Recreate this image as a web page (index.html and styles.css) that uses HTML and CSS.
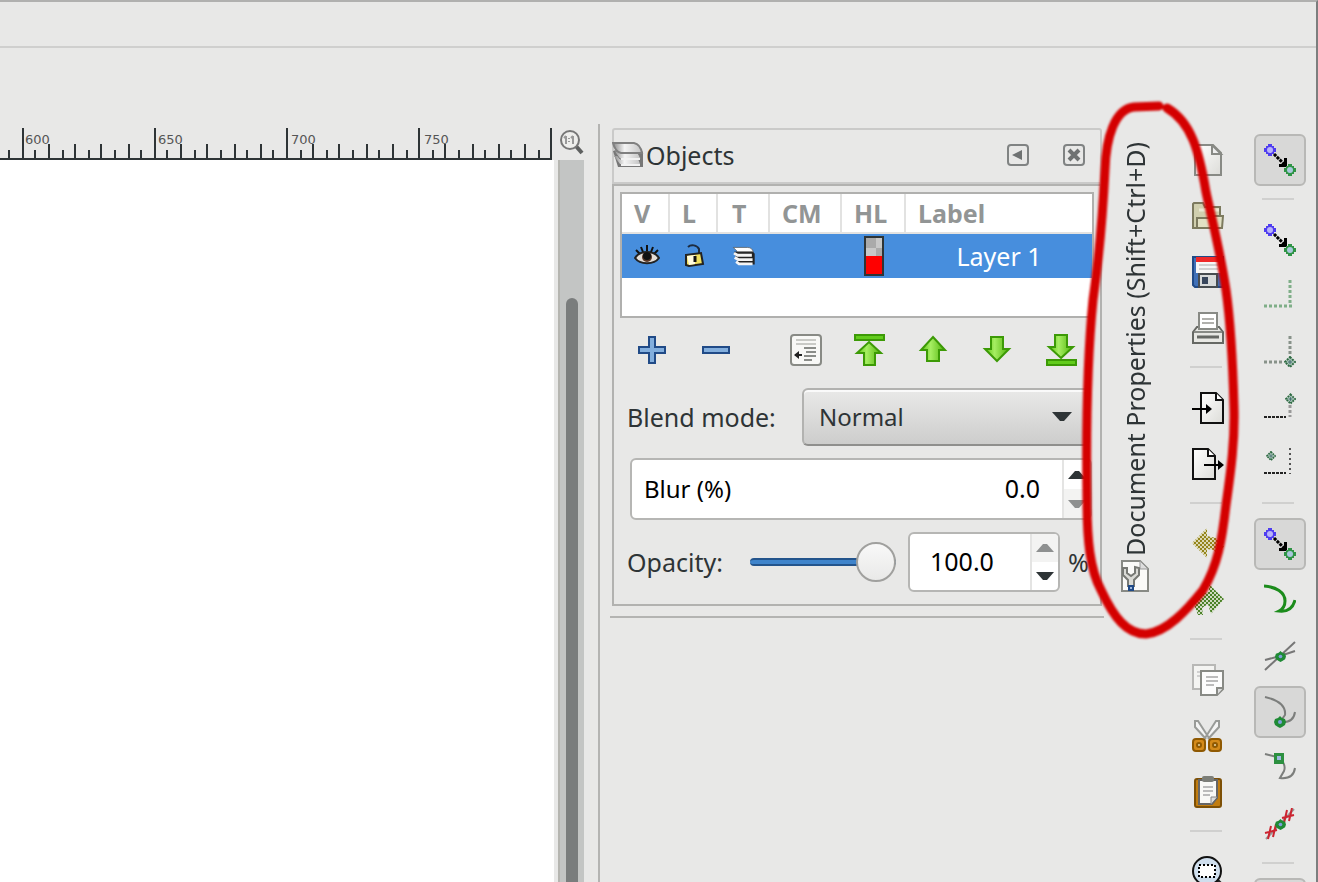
FILE: index.html
```html
<!DOCTYPE html>
<html lang="en">
<head>
  <meta charset="UTF-8">
  <meta name="viewport" content="width=device-width, initial-scale=1.0">
  <title>Objects</title>
  <link rel="stylesheet" href="styles.css">
</head>
<body>
  <!-- shared icon parts -->
  <svg class="defs" width="0" height="0" aria-hidden="true">
    <defs>
      <linearGradient id="green" x1="0" x2="1" y1="0" y2="0">
        <stop offset="0" stop-color="#5cc410"/>
        <stop offset="0.4" stop-color="#a6ee62"/>
        <stop offset="1" stop-color="#4fb30a"/>
      </linearGradient>
      <linearGradient id="paper" x1="0" x2="1" y1="0" y2="1">
        <stop offset="0" stop-color="#ffffff"/>
        <stop offset="1" stop-color="#dcdcd8"/>
      </linearGradient>
      <linearGradient id="sheet" x1="0" x2="1" y1="0" y2="0">
        <stop offset="0" stop-color="#8a8a8a"/>
        <stop offset="0.4" stop-color="#f4f4f4"/>
        <stop offset="1" stop-color="#c4c4c4"/>
      </linearGradient>
      <pattern id="dither-gold" width="4" height="4" patternUnits="userSpaceOnUse">
        <rect width="4" height="4" fill="#dcd8b4"/>
        <rect width="2" height="2" fill="#94851c"/>
        <rect x="2" y="2" width="2" height="2" fill="#94851c"/>
      </pattern>
      <pattern id="dither-green" width="4" height="4" patternUnits="userSpaceOnUse">
        <rect width="4" height="4" fill="#ced9c0"/>
        <rect width="2" height="2" fill="#4b8228"/>
        <rect x="2" y="2" width="2" height="2" fill="#4b8228"/>
      </pattern>
      <symbol id="snap" viewBox="0 0 32 32">
        <path d="M10 10l10 10" stroke="#000" stroke-width="3" stroke-dasharray="3 1"/>
        <path d="M23 23h-8v-3h3l2-2v-4h3z" fill="#000"/>
        <path d="M4 0h4v2h2v2h2v4h-2v2H8v2H4v-2H2V8H0V4h2V2h2z" fill="#4f3df0"/>
        <circle cx="6" cy="6" r="3" fill="#b9b4f8"/>
        <path d="M24 20h4v2h2v2h2v4h-2v2h-2v2h-4v-2h-2v-2h-2v-4h2v-2h2z" fill="#2f9445"/>
        <circle cx="26" cy="26" r="3" fill="#a9c6dc"/>
      </symbol>
      <symbol id="node" viewBox="0 0 12 12">
        <path d="M6 0l2 2 3 1 1 3-1 3-3 2-2 1-2-1-3-2-1-3 1-3 3-1z" fill="#1f8a35"/>
        <circle cx="6" cy="6" r="2" fill="#7f9cdc"/>
      </symbol>
      <symbol id="diamond" viewBox="0 0 12 12">
        <path d="M6 1l5 5-5 5-5-5z" fill="#a4c0b4" stroke="#2d6a42" stroke-width="2" stroke-dasharray="2 1"/>
        <path d="M4 6h4M6 4v4" stroke="#456a70"/>
      </symbol>
      <symbol id="layers" viewBox="0 0 32 28">
        <path d="M1 10l5 16h25V11l-4-3z" fill="#777"/>
        <path d="M2 15l6 8h20l-3-8z" fill="url(#sheet)"/>
        <path d="M2 10l6 8h21l-4-8z" fill="url(#sheet)" stroke="#777"/>
        <path d="M1 2h21c5 1 7 5 8 10H9C4 11 2 6 1 2z" fill="url(#sheet)" stroke="#808080" stroke-width="2"/>
        <path d="M9 24h19M9 18h19" stroke="#f2f2f2" stroke-width="2"/>
      </symbol>
    </defs>
  </svg>

  <header class="menubar"></header>
  <div class="tool-controls"></div>

  <main class="workspace">
    <section class="canvas-area">
      <div class="ruler">
        <svg width="552" height="32">
          <g stroke="#2e3436" stroke-width="2">
            <path d="M0 31h552"/>
            <path d="M23 0v32M155 0v32M287 0v32M419 0v32M551 0v32"/>
            <path d="M49 16v16M75 16v16M101 16v16M129 16v16M181 16v16M207 16v16M235 16v16M261 16v16M313 16v16M339 16v16M367 16v16M393 16v16M445 16v16M473 16v16M499 16v16M525 16v16"/>
            <path d="M9 22v10M35 22v10M63 22v10M89 22v10M115 22v10M141 22v10M167 22v10M195 22v10M221 22v10M247 22v10M273 22v10M301 22v10M327 22v10M353 22v10M379 22v10M407 22v10M433 22v10M459 22v10M485 22v10M511 22v10M539 22v10"/>
          </g>
          <g class="ruler-labels">
            <text x="25" y="16">600</text>
            <text x="158" y="16">650</text>
            <text x="291" y="16">700</text>
            <text x="424" y="16">750</text>
          </g>
        </svg>
      </div>
      <div class="page"></div>
    </section>

    <div class="scroll-area">
      <button class="zoom-fit" aria-label="Zoom 1:1">
        <svg width="26" height="26" viewBox="0 0 26 26">
          <path d="M17 16l7 8" stroke="#5e6060" stroke-width="4"/>
          <circle cx="12" cy="11" r="9" fill="#eeeeec" stroke="#777" stroke-width="2"/>
          <path d="M8 7v8M15 7v8M6 9l2-2M13 9l2-2M11 9v1M11 12v1" stroke="#999" stroke-width="2" fill="none"/>
        </svg>
      </button>
      <div class="scrollbar"><div class="thumb"></div></div>
    </div>

    <section class="dock">
      <div class="dock-header">
        <svg class="dock-icon" width="32" height="28"><use href="#layers"/></svg>
        <h2>Objects</h2>
        <button class="frame-btn" aria-label="Iconify">
          <svg width="18" height="18"><path d="M3 9l10-5v10z" fill="#6f7272"/></svg>
        </button>
        <button class="frame-btn" aria-label="Close">
          <svg width="18" height="18"><path d="M4 4l10 10M14 4L4 14" stroke="#6f7272" stroke-width="4"/></svg>
        </button>
      </div>

      <div class="dock-body">
        <div class="tree">
          <table>
            <thead>
              <tr>
                <th class="c-v">V</th>
                <th class="c-l">L</th>
                <th class="c-t">T</th>
                <th class="c-cm">CM</th>
                <th class="c-hl">HL</th>
                <th>Label</th>
              </tr>
            </thead>
            <tbody>
              <tr>
                <td>
                  <svg width="26" height="24" viewBox="0 0 26 24">
                    <path d="M2 6l4 4M7 3l2 5M13 1v6M19 3l-2 5M24 6l-4 4" stroke="#111" stroke-width="2"/>
                    <path d="M1 14c5-8 19-8 24 0-5 7-19 7-24 0z" fill="#e6dfd8" stroke="#222" stroke-width="2"/>
                    <circle cx="13" cy="13" r="5" fill="#5c3a28"/>
                    <circle cx="13" cy="12" r="4" fill="#111"/>
                  </svg>
                </td>
                <td>
                  <svg width="24" height="24" viewBox="0 0 24 24">
                    <path d="M6 3c3-3 9-2 11 2v6" fill="none" stroke="#1d2c40" stroke-width="2"/>
                    <path d="M4 11l15-2 2 11-14 2-3-1z" fill="#f0e060" stroke="#222" stroke-width="2"/>
                    <path d="M5 12l8-1v9l-6 1z" fill="#fffbe0"/>
                    <path d="M13 12v6" stroke="#111" stroke-width="3"/>
                  </svg>
                </td>
                <td><svg class="layer-icon" width="24" height="20" viewBox="0 0 32 28">
                  <path d="M2 8l6 18h23V11l-4-5z" fill="#222"/>
                  <path d="M1 2h20c5 0 7 3 8 6H7z" fill="#fff" stroke="#555"/>
                  <path d="M2 10l5 3h20M3 16l5 3h20M5 22l4 3h19" stroke="#f4f4f4" stroke-width="4" fill="none"/>
                </svg></td>
                <td></td>
                <td><span class="swatch"></span></td>
                <td class="layer-name">Layer 1</td>
              </tr>
            </tbody>
          </table>
        </div>

        <div class="object-buttons">
          <button aria-label="Add layer">
            <svg width="32" height="32"><path d="M13 3h6v10h10v6H19v10h-6V19H3v-6h10z" fill="#82aedd" stroke="#204a87" stroke-width="2"/></svg>
          </button>
          <button aria-label="Remove layer">
            <svg width="32" height="32"><path d="M3 13h26v6H3z" fill="#82aedd" stroke="#204a87" stroke-width="2"/></svg>
          </button>
          <button class="push" aria-label="Collapse all">
            <svg width="32" height="32">
              <rect x="1" y="1" width="30" height="30" rx="3" fill="#f8f8f6" stroke="#888a85" stroke-width="2"/>
              <path d="M6 6h20M6 10h20" stroke="#c9cac6" stroke-width="2"/>
              <path d="M14 14h12M16 18h10M14 22h12M14 26h8" stroke="#8b8d89" stroke-width="2"/>
              <path d="M5 21h7" stroke="#222" stroke-width="2"/><path d="M4 21l5-4v8z" fill="#222"/>
            </svg>
          </button>
          <button aria-label="Move to top">
            <svg width="32" height="32">
              <path d="M1 1h29v5H1z" fill="#62cc1c" stroke="#3c9a06" stroke-width="2"/>
              <path d="M15 8l12 11h-6v12H10V19H3z" fill="url(#green)" stroke="#3c9a06" stroke-width="2"/>
            </svg>
          </button>
          <button aria-label="Move up">
            <svg width="32" height="32"><path d="M15 3l12 13h-6v11H9V16H3z" fill="url(#green)" stroke="#3c9a06" stroke-width="2"/></svg>
          </button>
          <button aria-label="Move down">
            <svg width="32" height="32"><path d="M15 27l12-12h-6V3H9v12H3z" fill="url(#green)" stroke="#3c9a06" stroke-width="2"/></svg>
          </button>
          <button aria-label="Move to bottom">
            <svg width="32" height="32">
              <path d="M1 26h29v5H1z" fill="#62cc1c" stroke="#3c9a06" stroke-width="2"/>
              <path d="M15 24l12-11h-6V1H9v12H3z" fill="url(#green)" stroke="#3c9a06" stroke-width="2"/>
            </svg>
          </button>
        </div>

        <div class="field">
          <label for="blend">Blend mode:</label>
          <div class="select-wrap">
            <select id="blend">
              <option>Normal</option>
              <option>Multiply</option>
              <option>Screen</option>
            </select>
            <svg width="20" height="10"><path d="M0 0h20l-8 9h-4z" fill="#2e3436"/></svg>
          </div>
        </div>

        <div class="blur">
          <label for="blur">Blur (%)</label>
          <input type="text" id="blur" value="0.0">
          <div class="spin">
            <button aria-label="Increase blur"><svg width="18" height="10"><path d="M0 9h18l-7-8h-4z" fill="#2e3436"/></svg></button>
            <button class="off" aria-label="Decrease blur"><svg width="18" height="10"><path d="M0 1h18l-7 8h-4z" fill="#8e9090"/></svg></button>
          </div>
        </div>

        <div class="field opacity">
          <label for="opacity">Opacity:</label>
          <input type="range" id="opacity" min="0" max="100" value="100">
          <div class="number">
            <input type="text" value="100.0" aria-label="Opacity value">
            <div class="spin">
              <button class="off" aria-label="Increase opacity"><svg width="18" height="10"><path d="M0 9h18l-7-8h-4z" fill="#8e9090"/></svg></button>
              <button aria-label="Decrease opacity"><svg width="18" height="10"><path d="M0 1h18l-7 8h-4z" fill="#2e3436"/></svg></button>
            </div>
          </div>
          <span>%</span>
        </div>
      </div>
      <hr>
    </section>

    <aside class="dock-tabs">
      <button class="tab">
        <span>Document Properties (Shift+Ctrl+D)</span>
        <svg width="28" height="32">
          <path d="M1 1h18l8 8v22H1z" fill="#fafaf8" stroke="#888a85" stroke-width="2"/>
          <path d="M19 1v8h8z" fill="#ddd" stroke="#999"/>
          <path d="M2 8v7l5 5v6h6v-6l5-5V8l-4-1v6l-4 3-4-3V8z" fill="#dadbd6" stroke="#777974" stroke-width="2"/>
          <path d="M7 25h6v6H7z" fill="#204a87"/><path d="M9 27h2v2H9z" fill="#9db8dc"/>
        </svg>
      </button>
      <!-- hand drawn ring around the tab -->
      <svg class="ring" width="170" height="560">
        <g fill="none" stroke="#d40000" stroke-width="9" stroke-linecap="round">
          <path d="M75 16L50 17C31 19 22 47 21 80C18 140 14 175 9 210C4 260 2 340 3 410C3 450 6 480 17 500C30 528 43 544 62 544C83 542 103 520 119 500C134 475 138 450 142 415C147 380 151 350 150 317C149 280 147 235 142 200C136 160 128 130 122 102C115 60 107 32 83 18"/>
        </g>
      </svg>
    </aside>

    <nav class="toolbar">
      <button aria-label="New"><svg width="32" height="32"><path d="M3 1h18l8 8v22H3z" fill="url(#paper)" stroke="#888a85" stroke-width="2"/><path d="M20 1v9h9z" fill="#eee" stroke="#888a85" stroke-width="2"/></svg></button>
      <button aria-label="Open"><svg width="32" height="32"><path d="M2 3h9l2 4h15v21H1V4z" fill="#d0cfae" stroke="#7c7a5e" stroke-width="2"/><path d="M7 10h20" stroke="#e9e8d3" stroke-width="3"/><path d="M5 28V18h13l2-2h11l-1 12z" fill="#e1e0c4" stroke="#7c7a5e" stroke-width="2"/></svg></button>
      <button aria-label="Save"><svg width="32" height="32"><path d="M1 1h30v30H3l-2-2z" fill="#3f70b8" stroke="#204a87" stroke-width="2"/><path d="M4 1h25v16H4z" fill="#f6f6f6"/><path d="M4 1h25v5H4z" fill="#ef2929"/><path d="M7 9h19M7 13h19" stroke="#d0d0d0" stroke-width="2"/><path d="M7 18h18v13H7z" fill="#d8dada" stroke="#474c50" stroke-width="2"/><path d="M10 21h6v7h-6z" fill="#38465c"/></svg></button>
      <button aria-label="Print"><svg width="32" height="32"><path d="M1 20l4-5h22l4 5v11H1z" fill="#e8e8e4" stroke="#666864" stroke-width="2"/><path d="M7 17V1h18v16z" fill="#fff" stroke="#888a85" stroke-width="2"/><path d="M10 7h12M10 11h12" stroke="#b0b0ac" stroke-width="2"/><path d="M5 25h22" stroke="#666864" stroke-width="3"/><path d="M2 20h28" stroke="#888a85" stroke-width="2"/></svg></button>
      <hr>
      <button aria-label="Import"><svg width="32" height="32"><path d="M9 1h15l7 7v23H9z" fill="url(#paper)" stroke="#111" stroke-width="2"/><path d="M24 1v7h7" fill="#fff" stroke="#111" stroke-width="2"/><path d="M0 17h16" stroke="#000" stroke-width="2"/><path d="M14 12l6 5-6 5z"/></svg></button>
      <button aria-label="Export"><svg width="32" height="32"><path d="M1 1h15l7 7v23H1z" fill="url(#paper)" stroke="#111" stroke-width="2"/><path d="M16 1v7h7" fill="#fff" stroke="#111" stroke-width="2"/><path d="M12 17h16" stroke="#000" stroke-width="2"/><path d="M26 12l6 5-6 5z"/></svg></button>
      <hr>
      <button aria-label="Undo"><svg width="32" height="32"><path d="M0 15L15 0v8l9 2 8 8-6 10-4-6-7-1v9z" fill="url(#dither-gold)"/></svg></button>
      <button aria-label="Redo"><svg width="32" height="32"><path d="M32 15L17 0v8L6 10 1 18l5 13 5 0-1-7 6-4 3 10z" fill="url(#dither-green)"/></svg></button>
      <hr>
      <button aria-label="Copy"><svg width="32" height="32"><path d="M1 1h22v24H1z" fill="#f4f4f2" stroke="#b8b8b6" stroke-width="2"/><path d="M5 8h4M5 12h4" stroke="#d0d0d0" stroke-width="2"/><path d="M9 7h22v18l-6 6H9z" fill="#fcfcfc" stroke="#888a85" stroke-width="2"/><path d="M31 24h-6v7" fill="#ddd" stroke="#888a85" stroke-width="2"/><path d="M14 13h12M14 17h12M14 21h8" stroke="#bbb" stroke-width="2"/></svg></button>
      <button aria-label="Cut"><svg width="32" height="32"><path d="M14 19L3 7V1h3l11 17M16 19L27 7V1h-3L13 18" fill="#f4f4f4" stroke="#999b98" stroke-width="2"/><rect x="1" y="19" width="12" height="12" rx="3" fill="#d48a1a" stroke="#8f5902" stroke-width="2"/><rect x="17" y="19" width="12" height="12" rx="3" fill="#d48a1a" stroke="#8f5902" stroke-width="2"/><circle cx="7" cy="25" r="2" fill="#e7d7a9" stroke="#8f5902" stroke-width="2"/><circle cx="23" cy="25" r="2" fill="#e7d7a9" stroke="#8f5902" stroke-width="2"/></svg></button>
      <button aria-label="Paste"><svg width="32" height="32"><rect x="3" y="3" width="26" height="28" rx="2" fill="#c17d11" stroke="#7d5006" stroke-width="2"/><path d="M7 4h18v18l-5 6H7z" fill="#f8f8f6" stroke="#666" stroke-width="2"/><path d="M25 21h-6v7" fill="#ddd" stroke="#888" /><rect x="10" y="0" width="12" height="6" rx="2" fill="#7c7e78"/><path d="M11 11h10M11 15h10M11 19h7" stroke="#bbb" stroke-width="2"/></svg></button>
      <hr>
      <button aria-label="Zoom selection"><svg width="32" height="32"><path d="M22 22l9 9" stroke="#222" stroke-width="5"/><circle cx="15" cy="15" r="14" fill="#cfdeed" stroke="#111" stroke-width="2"/><rect x="7" y="9" width="16" height="12" fill="#fff" stroke="#000" stroke-width="2" stroke-dasharray="2 2"/></svg></button>
    </nav>

    <nav class="toolbar snap-bar">
      <button class="on" aria-label="Enable snapping"><svg width="32" height="32"><use href="#snap"/></svg></button>
      <hr>
      <button aria-label="Snap bounding boxes"><svg width="32" height="32"><use href="#snap"/></svg></button>
      <button aria-label="Snap to edges"><svg width="32" height="32"><path d="M0 26h28M26 0v25" stroke="#7fae88" stroke-width="3" stroke-dasharray="3 2"/></svg></button>
      <button aria-label="Snap to corners"><svg width="32" height="32"><path d="M0 26h20M26 0v20" stroke="#88928a" stroke-width="3" stroke-dasharray="3 2"/><use href="#diamond" x="20" y="20" width="12" height="12"/></svg></button>
      <button aria-label="Snap edge midpoints"><svg width="32" height="32"><path d="M0 25h22" stroke="#222" stroke-width="2" stroke-dasharray="3 1"/><path d="M26 13v12" stroke="#999" stroke-width="3" stroke-dasharray="3 2"/><use href="#diamond" x="21" y="1" width="11" height="12"/></svg></button>
      <button aria-label="Snap centers"><svg width="32" height="32"><path d="M0 25h22" stroke="#222" stroke-width="2" stroke-dasharray="3 1"/><path d="M26 0v26" stroke="#555" stroke-width="2" stroke-dasharray="2 3"/><use href="#diamond" x="2" y="3" width="10" height="10"/></svg></button>
      <hr>
      <button class="on" aria-label="Snap nodes"><svg width="32" height="32"><use href="#snap"/></svg></button>
      <button aria-label="Snap to paths"><svg width="32" height="32"><path d="M0 2C12 3 21 8 21 17C21 22 19 25 15 27C24 28 29 24 31 16" fill="none" stroke="#1c8c1c" stroke-width="3"/></svg></button>
      <button aria-label="Snap intersections"><svg width="32" height="32"><path d="M1 30L31 2M1 20l15-4 15-5" fill="none" stroke="#777" stroke-width="2"/><use href="#node" x="11" y="11" width="11" height="11"/></svg></button>
      <button class="on" aria-label="Snap cusp nodes"><svg width="32" height="32"><path d="M1 1C14 4 22 10 21 19L16 26C25 27 30 23 31 16" fill="none" stroke="#7c7e7c" stroke-width="2"/><use href="#node" x="10" y="20" width="12" height="12"/></svg></button>
      <button aria-label="Snap smooth nodes"><svg width="32" height="32"><path d="M1 2l12 3C19 8 22 14 20 19L16 26C25 27 30 23 31 16" fill="none" stroke="#7c7e7c" stroke-width="2"/><rect x="10" y="1" width="10" height="11" fill="#2c9040"/><rect x="13" y="4" width="4" height="4" fill="#a0b8e0"/></svg></button>
      <button aria-label="Snap line midpoints"><svg width="32" height="32"><path d="M2 31L30 1" stroke="#999" stroke-width="2"/><path d="M4 31l3-13M9 29l3-13M1 25l12-3M20 15l3-13M25 13l3-13M18 10l12-3" stroke="#cc2430" stroke-width="2"/><use href="#node" x="11" y="11" width="11" height="11"/></svg></button>
      <hr>
      <button class="on" aria-label="Snap others"></button>
    </nav>
  </main>
</body>
</html>
```
FILE: styles.css
```css
* {
  box-sizing: border-box;
}
body {
  margin: 0;
  height: 100vh;
  overflow: hidden;
  display: flex;
  flex-direction: column;
  background-color: #e8e8e7;
  border-top: 2px solid #b0b0af;
  border-right: 2px solid #7c7e7e;
  font-family: "Noto Sans", sans-serif;
  font-size: 25px;
  line-height: 30px;
  color: #2e3436;
}
button,
input,
select {
  font: inherit;
  color: inherit;
  margin: 0;
  padding: 0;
  border: none;
  background: none;
}
button {
  display: flex;
  align-items: center;
  justify-content: center;
}
svg {
  display: block;
  flex: none;
}
.defs {
  position: absolute;
}
.menubar {
  height: 46px;
  flex: none;
  border-bottom: 2px solid #cfcfce;
}
.tool-controls {
  height: 76px;
  flex: none;
}
.workspace {
  flex: 1;
  min-height: 0;
  display: flex;
}

/* canvas */
.canvas-area {
  flex: 1;
  min-width: 0;
  display: flex;
  flex-direction: column;
}
.ruler {
  display: flex;
  justify-content: flex-end;
  overflow: hidden;
  padding: 4px 2px 0 0;
}
.ruler-labels {
  font-family: "DejaVu Sans", sans-serif;
  font-size: 13px;
  fill: #555;
}
.page {
  flex: 1;
  background: #fff;
}
.scroll-area {
  width: 26px;
  flex: none;
  margin: 0 14px 0 4px;
  display: flex;
  flex-direction: column;
}
.zoom-fit {
  height: 36px;
}
.scrollbar {
  flex: 1;
  background: #c3c5c4;
  border-left: 2px solid #b5b5b0;
  padding: 138px 6px 0;
}
.thumb {
  height: 100%;
  background: #7a7d7d;
  border-radius: 6px 6px 0 0;
}

/* objects dock */
.dock {
  width: 506px;
  flex: none;
  border-left: 2px solid #b4b4b2;
  padding: 4px 0 0 10px;
}
.dock-header {
  height: 56px;
  margin: 0 2px;
  border: 2px solid #cacac9;
  border-radius: 3px 3px 0 0;
  display: flex;
  align-items: center;
  padding: 0 15px 2px 0;
}
.dock-icon {
  margin-left: -2px;
}
.dock-header h2 {
  flex: 1;
  margin: 0 0 0 2px;
  font-size: 25px;
  font-weight: normal;
}
.frame-btn {
  width: 22px;
  height: 22px;
  border: 2px solid #808383;
  border-radius: 4px;
  margin-left: 34px;
}
.dock-body {
  margin: 0 2px;
  border: 2px solid #b2b2b0;
  padding: 6px 6px 12px;
}
.tree {
  height: 126px;
  border: 2px solid #b0b0ae;
  background: #fff;
}
.tree table {
  width: 100%;
  border-collapse: separate;
  border-spacing: 0;
  table-layout: fixed;
}
.tree th {
  height: 40px;
  padding: 0 0 0 12px;
  text-align: left;
  color: #929595;
  border-right: 2px solid #e2e2e1;
  border-bottom: 2px solid #e2e2e1;
}
.tree th:last-child {
  border-right: none;
}
.c-v,
.c-l {
  width: 48px;
}
.tree .c-t {
  width: 52px;
  padding-left: 14px;
}
.c-cm {
  width: 72px;
}
.c-hl {
  width: 64px;
}
.tree td {
  height: 44px;
  padding: 0 0 0 12px;
  background: #478edd;
  color: #fff;
}
.tree .layer-name {
  padding: 0;
  text-align: center;
}
.layer-icon {
  margin-left: 2px;
}
.swatch {
  display: block;
  width: 20px;
  height: 40px;
  margin-left: 10px;
  border: 2px solid #2e3436;
  background: linear-gradient(transparent 50%, #f00 50%),
    conic-gradient(#c8c8c8 25%, #aaa 0 50%, #c8c8c8 0 75%, #aaa 0) 0 0 / 20px 20px;
}
.object-buttons {
  display: flex;
  height: 70px;
}
.object-buttons button {
  width: 64px;
  height: 64px;
}
.object-buttons .push {
  margin-left: auto;
}
.field {
  display: flex;
  align-items: center;
  padding: 0 4px 0 7px;
}
.select-wrap {
  display: flex;
  align-items: center;
  width: 288px;
  margin-left: auto;
}
.select-wrap select {
  appearance: none;
  width: 100%;
  height: 58px;
  padding: 0 15px;
  border: 2px solid #b2b2b0;
  border-bottom-color: #8f8f8d;
  border-radius: 6px;
  background: linear-gradient(#e9e9e8, #cdcdcc);
  box-shadow: inset 0 2px #fafafa;
  font-size: 24px;
}
.select-wrap svg {
  margin-left: -38px;
  pointer-events: none;
}
.blur,
.number {
  display: flex;
  border: 2px solid #b6b6b4;
  border-radius: 6px;
  background: #fff;
  color: #000;
  overflow: hidden;
}
.blur {
  height: 62px;
  margin: 12px 2px 12px 10px;
  align-items: center;
}
.blur label {
  padding-left: 12px;
  font-size: 24px;
}
.blur input {
  flex: 1;
  min-width: 0;
  padding: 0 22px 2px 0;
  text-align: right;
}
.spin {
  width: 28px;
  align-self: stretch;
  display: flex;
  flex-direction: column;
  border-left: 2px solid #e4e4e3;
}
.spin button {
  flex: 1;
}
.spin .off {
  background: #f3f3f2;
}
.opacity input[type="range"] {
  appearance: none;
  width: 146px;
  height: 40px;
  margin-left: auto;
}
.opacity input[type="range"]::-webkit-slider-runnable-track {
  height: 8px;
  border-radius: 4px;
  background: #3f84cb;
  border: solid #23548c;
  border-width: 2px 0;
}
.opacity input[type="range"]::-webkit-slider-thumb {
  appearance: none;
  width: 40px;
  height: 40px;
  margin-top: -18px;
  border: 2px solid #a0a09e;
  border-radius: 50%;
  background: linear-gradient(#f8f8f8, #e9e9e8);
}
.number {
  width: 152px;
  height: 60px;
  margin: 0 8px 0 12px;
}
.number input {
  flex: 1;
  min-width: 0;
  padding: 0 0 2px 20px;
}
.opacity > span {
  width: 22px;
}
.dock > hr {
  margin: 10px 0 0;
  border: none;
  border-top: 2px solid #b4b4b2;
}

/* docked tab strip */
.dock-tabs {
  position: relative;
  width: 76px;
  flex: none;
  padding: 18px 0 0 16px;
}
.tab {
  flex-direction: column;
  gap: 4px;
}
.tab span {
  writing-mode: vertical-rl;
  transform: rotate(180deg);
}
.ring {
  position: absolute;
  left: -20px;
  top: -34px;
  z-index: 1;
  overflow: visible;
  pointer-events: none;
  filter: blur(1px);
}

/* icon toolbars */
.toolbar {
  width: 56px;
  flex: none;
  padding-top: 8px;
  display: flex;
  flex-direction: column;
  align-items: center;
  overflow: hidden;
}
.toolbar button {
  width: 52px;
  height: 52px;
  margin: 2px 0;
  flex: none;
}
.toolbar hr {
  width: 32px;
  flex: none;
  margin: 10px 4px 12px 0;
  border: none;
  border-top: 2px solid #d0d0cf;
}
.snap-bar {
  width: 80px;
  padding-left: 8px;
}
.toolbar .on {
  background: #d8d8d7;
  border: 2px solid #b8b8b6;
  border-radius: 6px;
}
```
